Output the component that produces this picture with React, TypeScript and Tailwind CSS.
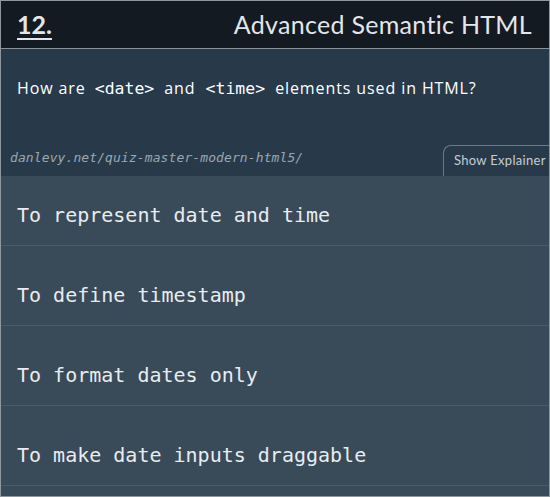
import React from "react";

export default function App() {
  const answers = [
    "To represent date and time",
    "To define timestamp",
    "To format dates only",
    "To make date inputs draggable",
  ];
  return (
    <div className="w-[550px] h-[497px] border border-[#8f979e] flex flex-col bg-[#394a59] overflow-hidden">
      <div className="h-[47px] shrink-0 bg-[#131a21] flex items-center justify-between pl-4 pr-[17px] font-['Lato',sans-serif]">
        <span className="text-[25px] font-bold text-[#e3e6ea] underline underline-offset-[4px] decoration-2 leading-none">
          12.
        </span>
        <span className="text-[25px] font-normal text-[#e3e6ea] leading-none tracking-[0.3px]">
          Advanced Semantic HTML
        </span>
      </div>
      <div className="h-px shrink-0 bg-[#8a9299]" />
      <div className="h-[127px] shrink-0 bg-[#283a4a] flex flex-col">
        <div className="pt-[27px] pl-4 flex items-baseline text-[16px] leading-6 text-white font-['Open_Sans',sans-serif] tracking-[0.9px] whitespace-pre">
          <span>How are</span>
          <span className="ml-[9px] text-[16.5px] tracking-normal font-['DejaVu_Sans_Mono',monospace]">&lt;date&gt;</span>
          <span className="ml-[10px]">and</span>
          <span className="ml-[10px] text-[16.5px] tracking-normal font-['DejaVu_Sans_Mono',monospace]">&lt;time&gt;</span>
          <span className="ml-[10px]">elements used in HTML?</span>
        </div>
        <div className="mt-auto flex items-end justify-between">
          <span className="pl-[9px] pb-[10px] text-[13px] italic text-[#9aa7b2] font-['DejaVu_Sans_Mono',monospace] leading-4 tracking-[0.1px]">
            danlevy.net/quiz-master-modern-html5/
          </span>
          <div className="h-[31px] w-[106px] border-t border-l border-[#6b7a87] rounded-tl-[8px] flex items-center pl-[10px] text-[13px] text-[#c5ccd3] font-['Lato',sans-serif] tracking-[0.3px]">
            Show Explainer
          </div>
        </div>
      </div>
      {answers.map((a, i) => (
        <div
          key={a}
          className={`${i === 0 ? "h-[70px]" : "h-[80px]"} shrink-0 border-b border-[#4a5b69] flex items-end pb-[18px] pl-4 text-[20px] leading-6 text-[#e8ecef] font-['DejaVu_Sans_Mono',monospace]`}
        >
          {a}
        </div>
      ))}
      <div className="flex-1" />
    </div>
  );
}
